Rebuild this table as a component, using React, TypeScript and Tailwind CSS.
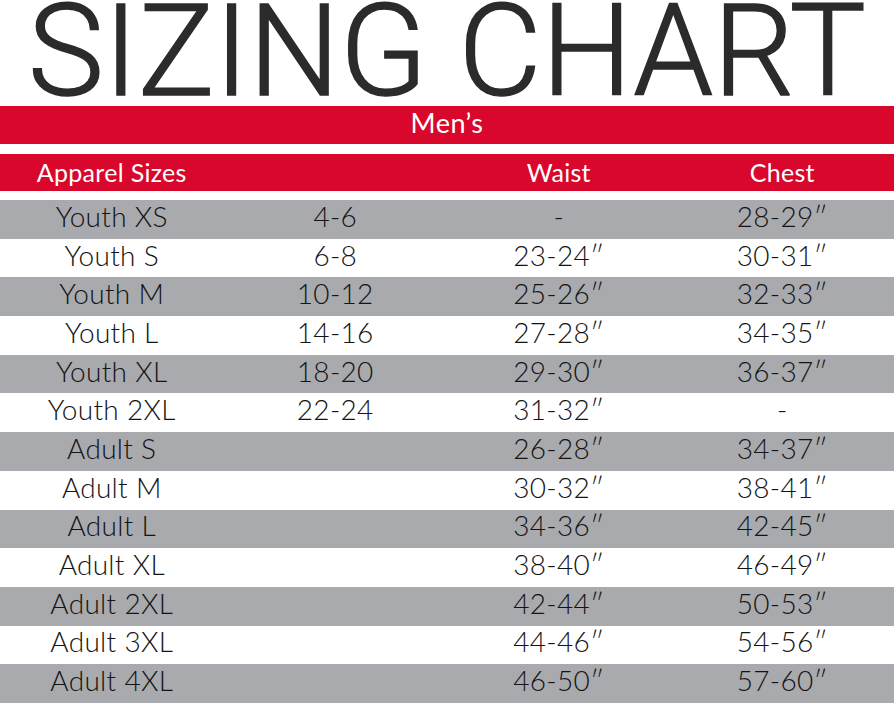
import React from 'react';

type Row = { size: string; age: string; waist: string; chest: string };

const rows: Row[] = [
  { size: 'Youth XS', age: '4-6', waist: '-', chest: '28-29″' },
  { size: 'Youth S', age: '6-8', waist: '23-24″', chest: '30-31″' },
  { size: 'Youth M', age: '10-12', waist: '25-26″', chest: '32-33″' },
  { size: 'Youth L', age: '14-16', waist: '27-28″', chest: '34-35″' },
  { size: 'Youth XL', age: '18-20', waist: '29-30″', chest: '36-37″' },
  { size: 'Youth 2XL', age: '22-24', waist: '31-32″', chest: '-' },
  { size: 'Adult S', age: '', waist: '26-28″', chest: '34-37″' },
  { size: 'Adult M', age: '', waist: '30-32″', chest: '38-41″' },
  { size: 'Adult L', age: '', waist: '34-36″', chest: '42-45″' },
  { size: 'Adult XL', age: '', waist: '38-40″', chest: '46-49″' },
  { size: 'Adult 2XL', age: '', waist: '42-44″', chest: '50-53″' },
  { size: 'Adult 3XL', age: '', waist: '44-46″', chest: '54-56″' },
  { size: 'Adult 4XL', age: '', waist: '46-50″', chest: '57-60″' },
];

const App: React.FC = () => {
  return (
    <div className="w-[894px] h-[703px] bg-white overflow-hidden font-['Lato','Noto_Sans',sans-serif]">
      {/* Title */}
      <h1 className="h-[106px] leading-[102px] text-center text-[128px] font-light text-[#2b2b2b] [-webkit-text-stroke:1.5px_#2b2b2b] font-['Roboto','Liberation_Sans',sans-serif] whitespace-nowrap">
        SIZING CHART
      </h1>

      {/* Section band */}
      <div className="h-[38px] bg-[#d8072b] text-white text-[27px] tracking-[0.5px] flex items-center justify-center pb-[3px]">
        Men’s
      </div>
      <div className="h-[10px]" />

      {/* Column headers */}
      <div className="h-[37px] bg-[#d8072b] text-white text-[25px] tracking-[0.3px] grid grid-cols-4 items-center text-center pb-[5px]">
        <div>Apparel Sizes</div>
        <div></div>
        <div>Waist</div>
        <div>Chest</div>
      </div>
      <div className="h-[9px]" />

      {/* Rows */}
      {rows.map((r, i) => (
        <div
          key={r.size}
          className={`h-[38.7px] grid grid-cols-4 items-center text-center text-[28px] font-light tracking-[0.3px] text-[#141414] pb-[7px] ${
            i % 2 === 0 ? 'bg-[#a9aaad]' : 'bg-white'
          }`}
        >
          <div className="leading-[28px]">{r.size}</div>
          <div className="leading-[28px]">{r.age}</div>
          <div className="leading-[28px]">{r.waist}</div>
          <div className="leading-[28px]">{r.chest}</div>
        </div>
      ))}
    </div>
  );
};

export default App;
